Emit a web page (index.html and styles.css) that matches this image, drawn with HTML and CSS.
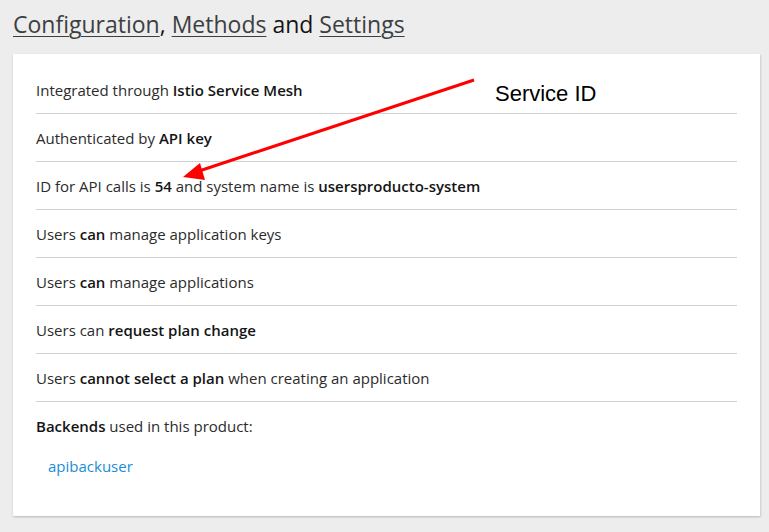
FILE: index.html
```html
<!DOCTYPE html>
<html>
<head>
<meta charset="utf-8">
<link rel="stylesheet" href="styles.css">
</head>
<body>
<div class="page">
  <h1 class="title"><a href="#">Configuration</a>, <a href="#">Methods</a> and <a href="#">Settings</a></h1>
  <div class="card">
    <ul class="list">
      <li class="row">Integrated through <b>Istio Service Mesh</b></li>
      <li class="row">Authenticated by <b>API key</b></li>
      <li class="row">ID for API calls is <b>54</b> and system name is <b>usersproducto-system</b></li>
      <li class="row">Users <b>can</b> manage application keys</li>
      <li class="row">Users <b>can</b> manage applications</li>
      <li class="row">Users can <b>request plan change</b></li>
      <li class="row">Users <b>cannot select a plan</b> when creating an application</li>
      <li class="row last"><b>Backends</b> used in this product:
        <div class="backends"><a href="#">apibackuser</a></div>
      </li>
    </ul>
    <div class="note">Service ID</div>
    <svg class="arrow" width="769" height="532" viewBox="0 0 769 532">
      <line x1="474" y1="80" x2="190" y2="174" stroke="#f00" stroke-width="3"/>
      <polygon points="183,177 200,163 205,180" fill="#f00"/>
    </svg>
  </div>
</div>
</body>
</html>
```
FILE: styles.css
```css
html, body {
  margin: 0;
  padding: 0;
}
body {
  background: #ededed;
  font-family: "Open Sans", "Liberation Sans", sans-serif;
  color: #2b2b2b;
  width: 769px;
  height: 532px;
  overflow: hidden;
}
.page {
  padding: 8px 9px 0 13px;
}
.title {
  margin: 0 0 13px 0;
  font-size: 23px;
  font-weight: 400;
  line-height: 33px;
  color: #151515;
}
.title a {
  color: #3c3f42;
  text-decoration: underline;
  text-decoration-thickness: 1px;
  text-underline-offset: 3px;
}
.card {
  background: #fff;
  box-shadow: 0 1px 2px rgba(0,0,0,0.16), 1px 1px 2px rgba(0,0,0,0.08);
  padding: 12px 23px 27px 23px;
}
.list {
  list-style: none;
  margin: 0;
  padding: 0;
}
.row {
  font-size: 15px;
  line-height: 24px;
  padding: 12px 0 11px 0;
  border-bottom: 1px solid #d2d2d2;
}
.row b {
  font-weight: 600;
  color: #151515;
}
.row.last {
  border-bottom: none;
}
.backends {
  padding: 16px 0 0 12px;
}
.backends a {
  color: #1b8dd4;
  text-decoration: none;
}
.note {
  position: absolute;
  left: 495px;
  top: 81px;
  font-family: "Liberation Sans", Arial, sans-serif;
  font-size: 22px;
  color: #000;
}
.arrow {
  position: absolute;
  left: 0;
  top: 0;
  pointer-events: none;
}
```
